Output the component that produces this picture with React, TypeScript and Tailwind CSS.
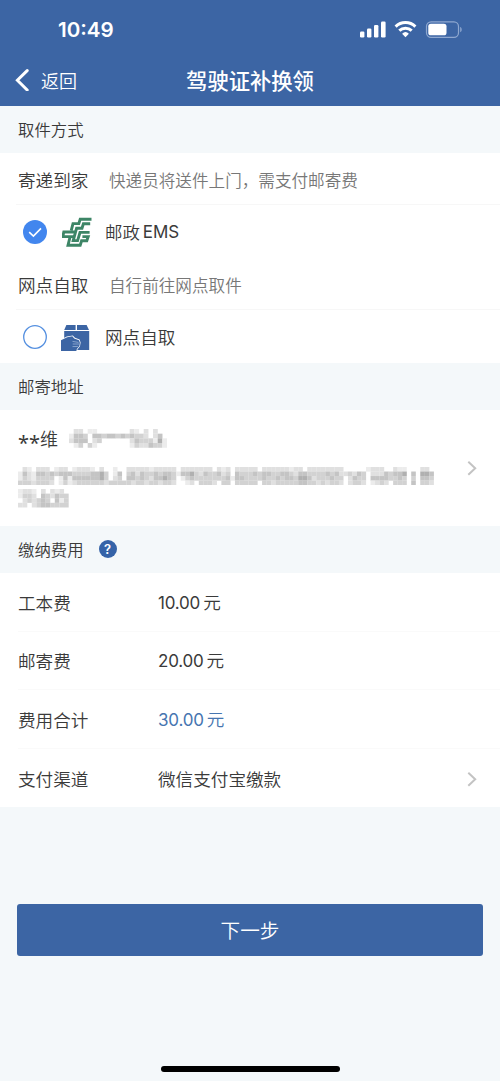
import type { ReactNode } from "react";

// darkness levels of the masked text, one character per cell (0 = white)
const maskedPhone = [
    "022011000000021020200",
    "144304434434343320240",
    "244402300000024333151",
    "013031000000013224331",
];

const maskedAddress = [
    "02102220122012221020010022222122222022222220212022222022222212202222222200000122200211000220",
    "14214434344433334453014034243343443144532433423043334344334432443333434223243022243445040554",
    "13213333014144444453023044343244543013433333334144333343343443554233343302433044443343030443",
    "33323332013123333332333332332332332001203332033033333033233333443323233202332012320333040332",
];

const maskedAddressEnd = ["12210202120", "13320432433", "02323430413", "22023443333"];

const shades = ["#ffffff", "#ececec", "#e0e0e0", "#d2d2d2", "#c4c4c4", "#b0b0b0"];

interface MosaicProps {
    rows: string[];
    cell: number;
    className?: string;
}

const Mosaic = ({ rows, cell, className }: MosaicProps) => {
    const cols = Math.max(...rows.map((row) => row.length));
    return (
        <svg
            className={className}
            width={cols * cell}
            height={rows.length * cell}
            viewBox={`0 0 ${cols} ${rows.length}`}
        >
            {rows.map((row, y) =>
                row.split("").map((level, x) =>
                    level === "0" ? null : (
                        <rect key={`${x}-${y}`} x={x} y={y} width="1.02" height="1.02" fill={shades[Number(level)]} />
                    ),
                ),
            )}
        </svg>
    );
};

const StatusIcons = () => (
    <svg width="103" height="18" viewBox="0 0 103 18" fill="#fff">
        {/* signal */}
        <rect x="0" y="10.5" width="4.4" height="6" rx="1.2" />
        <rect x="7" y="7.5" width="4.4" height="9" rx="1.2" />
        <rect x="14" y="4.1" width="4.4" height="12.4" rx="1.2" />
        <rect x="21" y="0.5" width="4.6" height="16" rx="1.2" />
        {/* wifi */}
        <g fill="none" stroke="#fff" strokeWidth="3">
            <path d="M35.6 5.6a14.2 14.2 0 0 1 19.8 0" />
            <path d="M39.3 9.7a9 9 0 0 1 12.4 0" />
        </g>
        <path d="M45.5 16.2l-3.4-3.5a5 5 0 0 1 6.8 0z" />
        {/* battery */}
        <rect x="66.5" y="0.8" width="32" height="15.5" rx="4.6" fill="none" stroke="#8fa8d0" strokeWidth="1.2" />
        <rect x="68.3" y="2.7" width="18.2" height="11.6" rx="2.6" />
        <path d="M100.2 6.1c2 .6 2 4.6 0 5.2z" fill="#8fa8d0" />
    </svg>
);

const EmsLogo = () => (
    <svg width="30" height="30" viewBox="0 0 30 30" fill="none" stroke="#3d8566" strokeWidth="2.9">
        <path d="M29.5 2.2H18.2L16.8 6.6H11L9.2 13.6" />
        <path d="M28.2 6.8H21.4L20 11.2H14.6L11.2 23.6H15.6L18 15.4H27.6" />
        <path d="M13 15H1.8L0.8 19.6H12" />
        <path d="M8.2 19.4L6 28.2H18.2L19.6 23.8H24.8L26.2 19.6H20.4" />
    </svg>
);

const PickupIcon = () => (
    <svg width="30" height="28" viewBox="0 0 30 28">
        <path d="M5.4 1H14.6V6H3.2zM16 1H25.6L28 6H16z" fill="#3c65a4" />
        <path d="M3.2 7H28.2V26H3.2z" fill="#3c65a4" />
        <path d="M0 15.4L5.8 12.4 11.8 11.4 14 13.8 18.6 15.6 19.6 18.6 19 22.2 16.4 25.6 16 28H0z" fill="#fff" />
        <path d="M0 16.2L6.2 13.3 11.3 12.2 13.2 14.5 18 16.2 18.9 18.7 18.4 21.9 15.9 25 15.3 27H0z" fill="#3c65a4" />
        <path d="M11.5 17.4l6 1M11.7 20h6.6M11.5 22.6l5.6-.2" stroke="#b9cbe6" strokeWidth=".6" />
    </svg>
);

const Chevron = () => (
    <svg width="10" height="16" viewBox="0 0 10 16" fill="none" stroke="#c3c3c3" strokeWidth="2">
        <path d="M1.3 1.8L8.2 8.3L1.3 14.8" />
    </svg>
);

const SectionTitle = ({ children }: { children: ReactNode }) => (
    <div className="flex h-[47px] shrink-0 items-center bg-[#f4f8fa] px-[18px] text-[16.4px]">
        {children}
    </div>
);

const MethodHeader = ({ title, hint }: { title: string; hint: string }) => (
    <div className="ml-4 flex h-[52px] items-center border-b border-[#f7f7f7] pt-[3px] pl-0.5">
        <span className="w-[91px] text-[17.6px]">{title}</span>
        <span className="pt-px text-[16.6px] text-[#777]">{hint}</span>
    </div>
);

interface FeeRowProps {
    label: string;
    amount?: string;
    text: string;
    highlight?: boolean;
    arrow?: boolean;
}

const FeeRow = ({ label, amount, text, highlight, arrow }: FeeRowProps) => (
    <div className="ml-[18px] flex h-[58.6px] items-center border-b border-[#fafafa] pt-px pr-[23px] text-[17.6px] last:border-0">
        <span className="w-[140px]">{label}</span>
        <span className={highlight ? "flex gap-[3px] text-[#4675b0]" : "flex gap-[3px]"}>
            {amount && <span className="pt-[2px] font-[Inter] text-[17px] font-normal tracking-[-0.2px]">{amount}</span>}
            <span>{text}</span>
        </span>
        {arrow && (
            <span className="ml-auto">
                <Chevron />
            </span>
        )}
    </div>
);

const App = () => {
    return (
        <div className="flex h-[1081px] w-[500px] flex-col overflow-hidden bg-[#f4f8fa] font-['Noto_Sans_CJK_SC',sans-serif] leading-none font-[350] text-[#3a3a3a]">
            <header className="h-[106px] shrink-0 bg-[#3c65a4] text-white">
                {/* status bar */}
                <div className="flex h-[55px] items-center justify-between pr-[37px] pl-[58px] pt-[5px]">
                    <span className="pt-px font-[Inter] text-[20.6px] font-semibold">10:49</span>
                    <StatusIcons />
                </div>
                {/* nav bar */}
                <div className="grid h-[50px] grid-cols-[1fr_auto_1fr] items-center">
                    <div className="flex items-center gap-3 pl-[15px] text-[18px]">
                        <svg width="14" height="22" viewBox="0 0 14 22" fill="none" stroke="#fff" strokeWidth="3">
                            <path d="M12.2 1.6L2.4 11.3L12.2 21" strokeLinecap="round" />
                        </svg>
                        <span>返回</span>
                    </div>
                    <h1 className="pb-px text-[21.3px] font-medium">驾驶证补换领</h1>
                </div>
            </header>

            <SectionTitle>取件方式</SectionTitle>
            <div className="h-[210px] shrink-0 bg-white">
                <MethodHeader title="寄递到家" hint="快递员将送件上门，需支付邮寄费" />
                <div className="flex h-[53px] items-center pl-[23px]">
                    <svg width="24" height="24" viewBox="0 0 24 24">
                        <circle cx="12" cy="12" r="12" fill="#4286ee" />
                        <path d="M6.2 12.2L10.4 16.1L18 8.4" fill="none" stroke="#fff" strokeWidth="1.6" />
                    </svg>
                    <span className="ml-[15px] w-[43px]">
                        <EmsLogo />
                    </span>
                    <span className="flex gap-[3px] pt-px text-[17.4px]">
                        邮政<span className="pt-px font-[Inter] text-[17px] font-normal">EMS</span>
                    </span>
                </div>
                <MethodHeader title="网点自取" hint="自行前往网点取件" />
                <div className="flex h-[53px] items-center pl-[23px]">
                    <svg width="24" height="24" viewBox="0 0 24 24">
                        <circle cx="12" cy="12" r="11.3" fill="none" stroke="#5590e0" strokeWidth="1.3" />
                    </svg>
                    <span className="ml-[14px] w-[44px] pt-0.5">
                        <PickupIcon />
                    </span>
                    <span className="text-[17.6px]">网点自取</span>
                </div>
            </div>

            <SectionTitle>邮寄地址</SectionTitle>
            <div className="flex h-[116px] shrink-0 items-center justify-between bg-white pr-[23px] pl-[18px]">
                <div>
                    <div className="flex h-[22px] items-center">
                        <span className="flex w-[22px] pt-[7px] font-['Noto_Sans'] text-[20px] font-normal">**</span>
                        <span className="w-[29px] pb-[2px] text-[18px]">维</span>
                        <Mosaic className="mb-px" rows={maskedPhone} cell={4.67} />
                    </div>
                    <Mosaic className="mt-[17px]" rows={maskedAddress} cell={4.52} />
                    <Mosaic className="mt-1" rows={maskedAddressEnd} cell={4.6} />
                </div>
                <Chevron />
            </div>

            <SectionTitle>
                缴纳费用
                <span className="mb-px ml-[15px] flex size-[18px] items-center justify-center rounded-full bg-[#3563a8] font-[Inter] text-[13px] font-semibold text-white">
                    ?
                </span>
            </SectionTitle>
            <div className="shrink-0 bg-white">
                <FeeRow label="工本费" amount="10.00" text="元" />
                <FeeRow label="邮寄费" amount="20.00" text="元" />
                <FeeRow label="费用合计" amount="30.00" text="元" highlight />
                <FeeRow label="支付渠道" text="微信支付宝缴款" arrow />
            </div>

            <button className="mx-[17px] mt-[97px] h-[52px] shrink-0 rounded-[3px] bg-[#3c65a4] pb-[2px] text-[19.6px] text-white">
                下一步
            </button>
            {/* home indicator */}
            <div className="mx-auto mt-auto mb-[9px] h-[6px] w-[179px] rounded-full bg-black" />
        </div>
    );
};

export default App;
